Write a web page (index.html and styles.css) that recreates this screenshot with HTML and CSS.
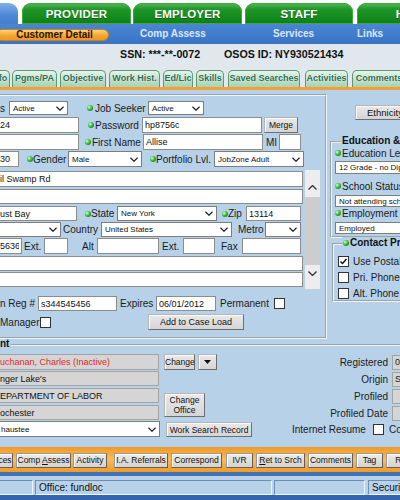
FILE: index.html
```html
<!DOCTYPE html>
<html>
<head>
<meta charset="utf-8">
<title>Customer Detail</title>
<link rel="stylesheet" href="styles.css">
</head>
<body>
<div class="page">
  <div class="tabs">
    <div class="tab tab-cust"></div>
    <div class="tab tab-green t-prov">PROVIDER</div>
    <div class="tab tab-green t-emp">EMPLOYER</div>
    <div class="tab tab-green t-staff">STAFF</div>
    <div class="tab tab-green t-help">HELP</div>
  </div>
  <div class="nav">
    <div class="pill">Customer Detail</div>
    <div class="navlink n-comp">Comp Assess</div>
    <div class="navlink n-serv">Services</div>
    <div class="navlink n-links">Links</div>
  </div>
  <div class="idbar">
    <div class="ids"><span class="ssn">SSN: ***-**-0072</span><span class="osos">OSOS ID: NY930521434</span></div>
    <div class="subtabs">
      <div class="st st1">fo</div>
      <div class="st st2">Pgms/PA</div>
      <div class="st st3">Objective</div>
      <div class="st st4">Work Hist.</div>
      <div class="st st5">Ed/Lic</div>
      <div class="st st6">Skills</div>
      <div class="st st7">Saved Searches</div>
      <div class="st st8">Activities</div>
      <div class="st st9">Comments</div>
    </div>
  </div>
  <div class="oline"></div>

  <div class="content">
    <div class="toprow">
      <div class="panel">
        <div class="row h14 mt5">
          <span class="lb w9">s</span>
          <div class="sel w59"><span>Active</span><svg class="chev" viewBox="0 0 9 5"><path d="M.5.5l4 4 4-4"/></svg></div>
          <span class="dot ml19"></span>
          <span class="lb ml2 w51">Job Seeker</span>
          <div class="sel w56 ml2"><span>Active</span><svg class="chev" viewBox="0 0 9 5"><path d="M.5.5l4 4 4-4"/></svg></div>
        </div>
        <div class="row h16 mt2">
          <input class="in w82 mln3" value="24">
          <span class="dot ml9"></span>
          <span class="lb ml1 w47">Password</span>
          <input class="in w120" value="hp8756c">
          <button class="btn w34 ml2">Merge</button>
        </div>
        <div class="row h16 mt1">
          <input class="in w82 mln3" value="">
          <span class="dot ml6"></span>
          <span class="lb w52 pl1">First Name</span>
          <input class="in w120" value="Allise">
          <span class="lb ml3 w13">MI</span>
          <input class="in w22" value="">
        </div>
        <div class="row h16 mt1">
          <input class="in w22 mln3" value="30">
          <span class="dot ml8"></span>
          <span class="lb w35">Gender</span>
          <div class="sel w74"><span>Male</span><svg class="chev" viewBox="0 0 9 5"><path d="M.5.5l4 4 4-4"/></svg></div>
          <span class="dot ml8"></span>
          <span class="lb w58">Portfolio Lvl.</span>
          <div class="sel w90"><span>JobZone Adult</span><svg class="chev" viewBox="0 0 9 5"><path d="M.5.5l4 4 4-4"/></svg></div>
        </div>

        <div class="scrollbox">
          <div class="sb-rows">
            <div class="row h16 mt1"><input class="in w306 mln3" value="il Swamp Rd"></div>
            <div class="row h15 mt2"><input class="in w306 mln3" value=""></div>
            <div class="row h15 mt2">
              <input class="in w80 mln3" value="ust Bay">
              <span class="dot ml8"></span>
              <span class="lb w26">State</span>
              <div class="sel w100"><span>New York</span><svg class="chev" viewBox="0 0 9 5"><path d="M.5.5l4 4 4-4"/></svg></div>
              <span class="dot ml5"></span>
              <span class="lb w18">Zip</span>
              <input class="in w55" value="13114">
            </div>
            <div class="row h15 mt1">
              <div class="sel w64 mln3"><span></span><svg class="chev" viewBox="0 0 9 5"><path d="M.5.5l4 4 4-4"/></svg></div>
              <span class="lb ml2 w38">Country</span>
              <div class="sel w131"><span>United States</span><svg class="chev" viewBox="0 0 9 5"><path d="M.5.5l4 4 4-4"/></svg></div>
              <span class="lb ml6 w27">Metro</span>
              <div class="sel w36"><span></span><svg class="chev" viewBox="0 0 9 5"><path d="M.5.5l4 4 4-4"/></svg></div>
            </div>
            <div class="row h16 mt1">
              <input class="in w25 mln3" value="5636">
              <span class="lb ml2 w20">Ext.</span>
              <input class="in w24" value="">
              <span class="lb ml14 w15">Alt</span>
              <input class="in w62" value="">
              <span class="lb ml3 w21">Ext.</span>
              <input class="in w32" value="">
              <span class="lb ml6 w21">Fax</span>
              <input class="in w59" value="">
            </div>
            <div class="row h15 mt2"><input class="in w306 mln3" value=""></div>
            <div class="row h15 mt1"><input class="in w306 mln3" value=""></div>
          </div>
          <div class="scrollbar">
            <svg class="sb-arrow sb-up" viewBox="0 0 9 5"><path d="M.5 4.5l4-4 4 4"/></svg>
            <div class="sb-thumb"></div>
            <svg class="sb-arrow sb-down" viewBox="0 0 9 5"><path d="M.5.5l4 4 4-4"/></svg>
          </div>
        </div>

        <div class="row h15 mt7">
          <span class="lb w38">n Reg #</span>
          <input class="in w79" value="s344545456">
          <span class="lb ml3 w36">Expires</span>
          <input class="in w60" value="06/01/2012">
          <span class="lb ml4 w54">Permanent</span>
          <span class="cb"></span>
        </div>
        <div class="row h16 mt3">
          <span class="lb w40">Manager</span>
          <span class="cb"></span>
          <button class="btn ml97 w96 btn-add">Add to Case Load</button>
        </div>
      </div>

      <div class="side">
        <button class="btn b-eth">Ethnicity</button>
        <div class="fs edu">
          <div class="legend">Education &amp; Training</div>
          <div class="fl"><span class="dot"></span>Education Level</div>
          <div class="sel esel es13 mt2"><span>12 Grade - no Diploma</span><svg class="chev" viewBox="0 0 9 5"><path d="M.5.5l4 4 4-4"/></svg></div>
          <div class="fl mt6"><span class="dot"></span>School Status</div>
          <div class="sel esel es12 mt3"><span>Not attending school</span><svg class="chev" viewBox="0 0 9 5"><path d="M.5.5l4 4 4-4"/></svg></div>
          <div class="fl"><span class="dot"></span>Employment Status</div>
          <div class="sel esel es12 mt3"><span>Employed</span><svg class="chev" viewBox="0 0 9 5"><path d="M.5.5l4 4 4-4"/></svg></div>
        </div>
        <div class="fs contact">
          <div class="legend"><span class="dot"></span>Contact Preference</div>
          <div class="cbrow mt6"><span class="cb"><svg viewBox="0 0 9 9"><path d="M1.5 4.5l2 2 4-4.5"/></svg></span>Use Postal Mail</div>
          <div class="cbrow mt4"><span class="cb"></span>Pri. Phone</div>
          <div class="cbrow mt4"><span class="cb"></span>Alt. Phone</div>
        </div>
      </div>
    </div>

    <div class="case">
      <div class="legend">nt</div>
      <div class="case-body">
        <div class="case-grid">
          <input class="in ro red c-r1" value="uchanan, Charles (Inactive)">
          <div class="chg">
            <button class="btn b-change">Change</button>
            <button class="btn b-dd"><svg viewBox="0 0 7 4"><path d="M0 0h7L3.5 4z"/></svg></button>
          </div>
          <input class="in ro c-r2" value="nger Lake's">
          <input class="in ro c-r3" value="EPARTMENT OF LABOR">
          <button class="btn b-office">Change Office</button>
          <input class="in ro c-r4" value="ochester">
          <div class="sel c-r5"><span>haustee</span><svg class="chev" viewBox="0 0 9 5"><path d="M.5.5l4 4 4-4"/></svg></div>
          <button class="btn b-wsr">Work Search Record</button>
        </div>
        <div class="case-right">
          <span class="cr-lb">Registered</span><span class="cr-box">0</span>
          <span class="cr-lb">Origin</span><span class="cr-box">S</span>
          <span class="cr-lb">Profiled</span><span class="cr-box"></span>
          <span class="cr-lb">Profiled Date</span><span class="cr-box"></span>
          <div class="ir"><span class="ir-lb">Internet Resume</span><span class="cb"></span><span class="ir-co">Confidential</span></div>
        </div>
      </div>
    </div>
  </div>

  <div class="toolbar">
    <button class="tb tb1">ces</button>
    <button class="tb tb2">Comp <u>A</u>ssess</button>
    <button class="tb tb3">Activity</button>
    <button class="tb tb4">I.A. Referrals</button>
    <button class="tb tb5">Correspond</button>
    <button class="tb tb6">IVR</button>
    <button class="tb tb7"><u>R</u>et to Srch</button>
    <button class="tb tb8">Comments</button>
    <button class="tb tb9">Tag</button>
    <button class="tb tb10">Resume</button>
  </div>

  <div class="status">
    <div class="sp sp1"></div>
    <div class="sp sp2">Office: fundloc</div>
    <div class="sp sp3"></div>
    <div class="sp sp4">Security</div>
  </div>
</div>
</body>
</html>
```

FILE: styles.css
```css
* { box-sizing: border-box; }
html, body { margin: 0; padding: 0; }
body {
  width: 400px; height: 500px; overflow: hidden;
  font-family: "Liberation Sans", Arial, sans-serif;
  color: #1b1b1b; background: #fff;
}
button, input { font-family: "Liberation Sans", Arial, sans-serif; margin: 0; }
.page { width: 400px; height: 500px; overflow: hidden; }

/* top tabs */
.tabs { display: flex; height: 24px; padding-top: 3px; background: #fff; }
.tab {
  flex-shrink: 0; height: 21px; border-radius: 9px 9px 0 0;
  color: #fff; font-weight: bold; font-size: 11.5px; line-height: 22px;
  text-align: center; white-space: nowrap; letter-spacing: 0.2px;
}
.tab-cust { margin-left: -90px; width: 108px; background: linear-gradient(#80b0ea, #4c86d4 60%, #4580cf); }
.tab-green {
  background: linear-gradient(#56bb56 0, #1f9528 30%, #148a1e 70%, #0f7c18 100%);
  box-shadow: inset 0 0 0 1px #3ca840;
  text-shadow: 0 1px 0 #0b5c12;
}
.t-prov { margin-left: 4px; width: 109px; }
.t-emp { margin-left: 2px; width: 109px; }
.t-staff { margin-left: 3px; width: 108px; }
.t-help { margin-left: 4px; width: 109px; }

/* blue nav */
.nav { display: flex; height: 20px; background: linear-gradient(#4a86d5, #3a73c3); }
.pill {
  flex-shrink: 0; margin: 5px 0 0 -4px; width: 113px; height: 12px; padding-left: 4px;
  border: 1px solid #c9811c; border-radius: 6px;
  background: linear-gradient(#ffd27a, #f6a531 55%, #f09522);
  font-weight: bold; font-size: 10px; line-height: 10px; text-align: center; color: #2b1500;
  white-space: nowrap;
}
.navlink { flex-shrink: 0; font-weight: bold; font-size: 10px; line-height: 20px; color: #dbe8fb; white-space: nowrap; }
.n-comp { margin-left: 31px; width: 66px; }
.n-serv { margin-left: 67px; width: 40px; }
.n-links { margin-left: 44px; }

/* id bar + subtabs */
.idbar { background: #e1e8ed; }
.ids { display: flex; height: 26px; padding-top: 3px; font-weight: bold; font-size: 10.7px; line-height: 14px; color: #111; white-space: nowrap; }
.ssn { margin-left: 120px; width: 104px; flex-shrink: 0; }
.subtabs { display: flex; height: 17px; overflow: hidden; }
.st {
  flex-shrink: 0; height: 17px; border: 1px solid #5c9a73; border-bottom: none;
  border-radius: 5px 5px 0 0;
  background: linear-gradient(#e6f4ea, #bbddc6 60%, #a9d2b6);
  color: #2e6f52; font-weight: bold; font-size: 9px; line-height: 15px;
  text-align: center; white-space: nowrap; text-shadow: 0 0 2px #fff;
}
.st1 { margin-left: -4px; width: 14px; }
.st2 { margin-left: 2px; width: 45px; }
.st3 { margin-left: 3px; width: 46px; }
.st4 { margin-left: 3px; width: 51px; }
.st5 { margin-left: 3px; width: 30px; }
.st6 { margin-left: 3px; width: 28px; }
.st7 { margin-left: 4px; width: 72px; }
.st8 { margin-left: 5px; width: 43px; }
.st9 { margin-left: 4px; width: 54px; }
.oline { height: 3px; background: #f2a035; }

/* content */
.content { height: 357px; padding-top: 4px; background: #b7d1e8; overflow: hidden; }
.toprow { display: flex; align-items: flex-start; }
.panel {
  flex-shrink: 0; margin-left: -2px; width: 329px;
  border: 2px groove #eef4f9; padding-bottom: 7px;
}
.row { display: flex; align-items: center; flex-shrink: 0; }
.h14 { height: 14px; } .h15 { height: 15px; } .h16 { height: 16px; }
.mt1 { margin-top: 1px; } .mt2 { margin-top: 2px; } .mt3 { margin-top: 3px; }
.mt4 { margin-top: 4px; } .mt5 { margin-top: 5px; } .mt6 { margin-top: 6px; } .mt7 { margin-top: 7px; }
.ml1 { margin-left: 1px; } .ml2 { margin-left: 2px; } .ml3 { margin-left: 3px; } .ml4 { margin-left: 4px; }
.ml5 { margin-left: 5px; } .ml6 { margin-left: 6px; } .ml8 { margin-left: 8px; } .ml9 { margin-left: 9px; }
.ml14 { margin-left: 14px; } .ml19 { margin-left: 19px; } .ml97 { margin-left: 97px; }
.mln3 { margin-left: -3px; }
.pl1 { padding-left: 1px; }
.w9 { width: 9px; } .w13 { width: 13px; } .w15 { width: 15px; } .w18 { width: 18px; }
.w20 { width: 20px; } .w21 { width: 21px; } .w22 { width: 22px; } .w24 { width: 24px; }
.w25 { width: 25px; } .w26 { width: 26px; } .w27 { width: 27px; } .w32 { width: 32px; }
.w34 { width: 34px; } .w35 { width: 35px; } .w36 { width: 36px; } .w38 { width: 38px; }
.w40 { width: 40px; } .w47 { width: 47px; } .w51 { width: 51px; } .w52 { width: 52px; }
.w54 { width: 54px; } .w55 { width: 55px; } .w56 { width: 56px; } .w58 { width: 58px; }
.w59 { width: 59px; } .w60 { width: 60px; } .w62 { width: 62px; } .w64 { width: 64px; }
.w74 { width: 74px; } .w79 { width: 79px; } .w80 { width: 80px; } .w82 { width: 82px; }
.w90 { width: 90px; } .w96 { width: 96px; } .w100 { width: 100px; } .w120 { width: 120px; }
.w131 { width: 131px; } .w306 { width: 306px; }

.lb { flex-shrink: 0; font-size: 10px; white-space: nowrap; color: #1b1b1b; }
.in {
  flex-shrink: 0; height: 100%; padding: 0 2px;
  border: 1px solid #8c8c8c; background: #fff; color: #111;
  font-size: 9px; outline: none; min-width: 0;
}
.sel {
  flex-shrink: 0; height: 100%; display: flex; align-items: center; justify-content: space-between;
  padding: 0 3px; background: #fff; border: 1px solid #7d7d7d;
  font-size: 8px; color: #111; white-space: nowrap; overflow: hidden;
}
.chev { width: 8px; height: 5px; flex-shrink: 0; fill: none; stroke: #1e1e1e; stroke-width: 1.3; }
.dot {
  flex-shrink: 0; width: 6px; height: 6px; border-radius: 50%;
  background: radial-gradient(circle at 35% 35%, #d8ffd0 0, #48c248 40%, #178a17 75%, #0d600d 100%);
}
.cb {
  flex-shrink: 0; width: 11px; height: 11px; border: 1px solid #333; background: #fff;
  display: flex; align-items: center; justify-content: center;
}
.cb svg { width: 9px; height: 9px; fill: none; stroke: #111; stroke-width: 1.5; }
.btn {
  flex-shrink: 0; height: 100%; padding: 0;
  border: 1px solid; border-color: #b5b5b5 #6e6e6e #6e6e6e #b5b5b5;
  background: linear-gradient(#e9e9e9, #d5d5d5);
  box-shadow: inset 1px 1px 0 #fafafa;
  font-size: 8.5px; color: #111; text-align: center; white-space: nowrap;
}
.btn-add { font-size: 9px; }

/* scroll region */
.scrollbox { display: flex; height: 119px; margin-top: 3px; }
.sb-rows { width: 305px; flex-shrink: 0; }
.scrollbar { width: 15px; flex-shrink: 0; background: #ededed; display: flex; flex-direction: column; align-items: center; }
.sb-arrow { width: 9px; height: 5px; fill: none; stroke: #333; stroke-width: 1.3; flex-shrink: 0; }
.sb-up { margin-top: 15px; }
.sb-thumb { width: 15px; height: 68px; margin-top: 7px; background: #cdcdcd; flex-shrink: 0; }
.sb-down { margin-top: 6px; }

/* side column */
.side { flex-shrink: 0; width: 120px; margin-left: 3px; }
.b-eth { display: block; margin: 11px 0 0 25px; width: 70px; height: 15px; text-align: left; padding-left: 11px; font-size: 9.5px; }
.fs { border: 2px groove #eef4f9; border-right: none; }
.legend {
  width: fit-content; margin-top: -8px; background: #b7d1e8;
  display: flex; align-items: center;
  font-weight: bold; font-size: 10px; line-height: 12px; padding: 0 1px;
  white-space: nowrap; color: #111;
}
.legend .dot { margin-right: 1px; }
.edu { margin-top: 21px; padding: 0 0 2px 3px; }
.edu .legend { margin-left: 6px; }
.fl { display: flex; align-items: center; height: 12px; font-size: 10px; white-space: nowrap; }
.fl .dot { margin-right: 1px; }
.esel { width: 100px; }
.es12 { height: 12px; } .es13 { height: 13px; }
.contact { margin-top: 5px; margin-left: 2px; padding: 0 0 1px 3px; }
.contact .legend { margin-left: 5px; }
.cbrow { display: flex; align-items: center; height: 12px; font-size: 10px; white-space: nowrap; }
.cbrow .cb { margin-left: 1px; margin-right: 4px; }

/* case section */
.case { margin-top: 5px; border-top: 2px groove #eef4f9; }
.case .legend { margin-left: 0; padding: 0 2px 0 0; }
.case-body { display: flex; margin-top: 4px; }
.case-grid {
  flex-shrink: 0; margin-left: -3px; display: grid;
  grid-template-columns: 162px 90px; column-gap: 5px;
  grid-template-rows: 17px 17px 17px 16px 17px; align-items: start;
}
.ro { background: #d5d5d5; border-color: #a3a3a3; width: 162px; grid-column: 1; }
.red { color: #e3262a; }
.c-r1 { grid-row: 1; height: 16px; }
.c-r2 { grid-row: 2; height: 15px; }
.c-r3 { grid-row: 3; height: 15px; }
.c-r4 { grid-row: 4; height: 15px; }
.c-r5 { grid-row: 5; grid-column: 1; width: 163px; height: 16px; }
.chg { grid-row: 1; grid-column: 2; display: flex; }
.b-change { width: 31px; height: 16px; }
.b-dd { margin-left: 3px; width: 19px; height: 16px; display: flex; align-items: center; justify-content: center; }
.b-dd svg { width: 7px; height: 4px; fill: #111; }
.b-office { grid-column: 2; grid-row: 3 / span 2; align-self: center; width: 41px; height: 24px; line-height: 10px; white-space: normal; }
.b-wsr { grid-column: 2; grid-row: 5; margin-left: 2px; margin-top: 1px; width: 86px; height: 15px; }
.case-right {
  flex-shrink: 0; margin-left: 38px; display: grid;
  grid-template-columns: 96px 60px; column-gap: 4px;
  grid-template-rows: 17px 17px 17px 16px 17px; align-items: center;
}
.cr-lb { text-align: right; font-size: 10px; white-space: nowrap; }
.cr-box { height: 15px; background: #d5d5d5; border: 1px solid #a3a3a3; font-size: 9px; line-height: 13px; padding-left: 2px; }
.ir { grid-column: 1 / span 2; display: flex; align-items: center; font-size: 10px; white-space: nowrap; }
.ir-lb { width: 73px; flex-shrink: 0; }
.ir .cb { margin-left: 8px; }
.ir-co { margin-left: 5px; }

/* bottom toolbar */
.toolbar {
  display: flex; height: 25px; padding-top: 6px; overflow: hidden;
  background: linear-gradient(#f09a24 0, #f4a93f 25%, #f9bb5e 50%, #f4a93f 75%, #f09a24 100%);
}
.tb {
  flex-shrink: 0; height: 15px; padding: 0;
  border: 1px solid; border-color: #9a9a9a #5f5f5f #5f5f5f #9a9a9a;
  background: linear-gradient(#ecebe7, #d6d3cd);
  box-shadow: inset 1px 1px 0 #fff;
  font-size: 8.5px; line-height: 13px; text-align: center; color: #111; white-space: nowrap;
}
.tb1 { margin-left: -3px; width: 16px; }
.tb2 { margin-left: 3px; width: 55px; }
.tb3 { margin-left: 2px; width: 34px; }
.tb4 { margin-left: 7px; width: 54px; }
.tb5 { margin-left: 3px; width: 51px; }
.tb6 { margin-left: 4px; width: 27px; }
.tb7 { margin-left: 3px; width: 49px; }
.tb8 { margin-left: 3px; width: 45px; }
.tb9 { margin-left: 3px; width: 27px; }
.tb10 { margin-left: 3px; width: 50px; }

/* status bar */
.status {
  display: flex; height: 28px; padding-top: 4px; overflow: hidden;
  border-top: 4px solid #4272b6; border-bottom: 5px solid #3566ad;
  background: #b8d2e9;
}
.sp {
  flex-shrink: 0; height: 15px; border: 1px solid;
  border-color: #6f8fb0 #f2f7fb #f2f7fb #6f8fb0;
  font-size: 10px; line-height: 13px; padding-left: 3px; white-space: nowrap; color: #111;
}
.sp1 { margin-left: -3px; width: 36px; }
.sp2 { margin-left: 2px; width: 237px; }
.sp3 { margin-left: 2px; width: 91px; }
.sp4 { margin-left: 3px; width: 80px; }
```
